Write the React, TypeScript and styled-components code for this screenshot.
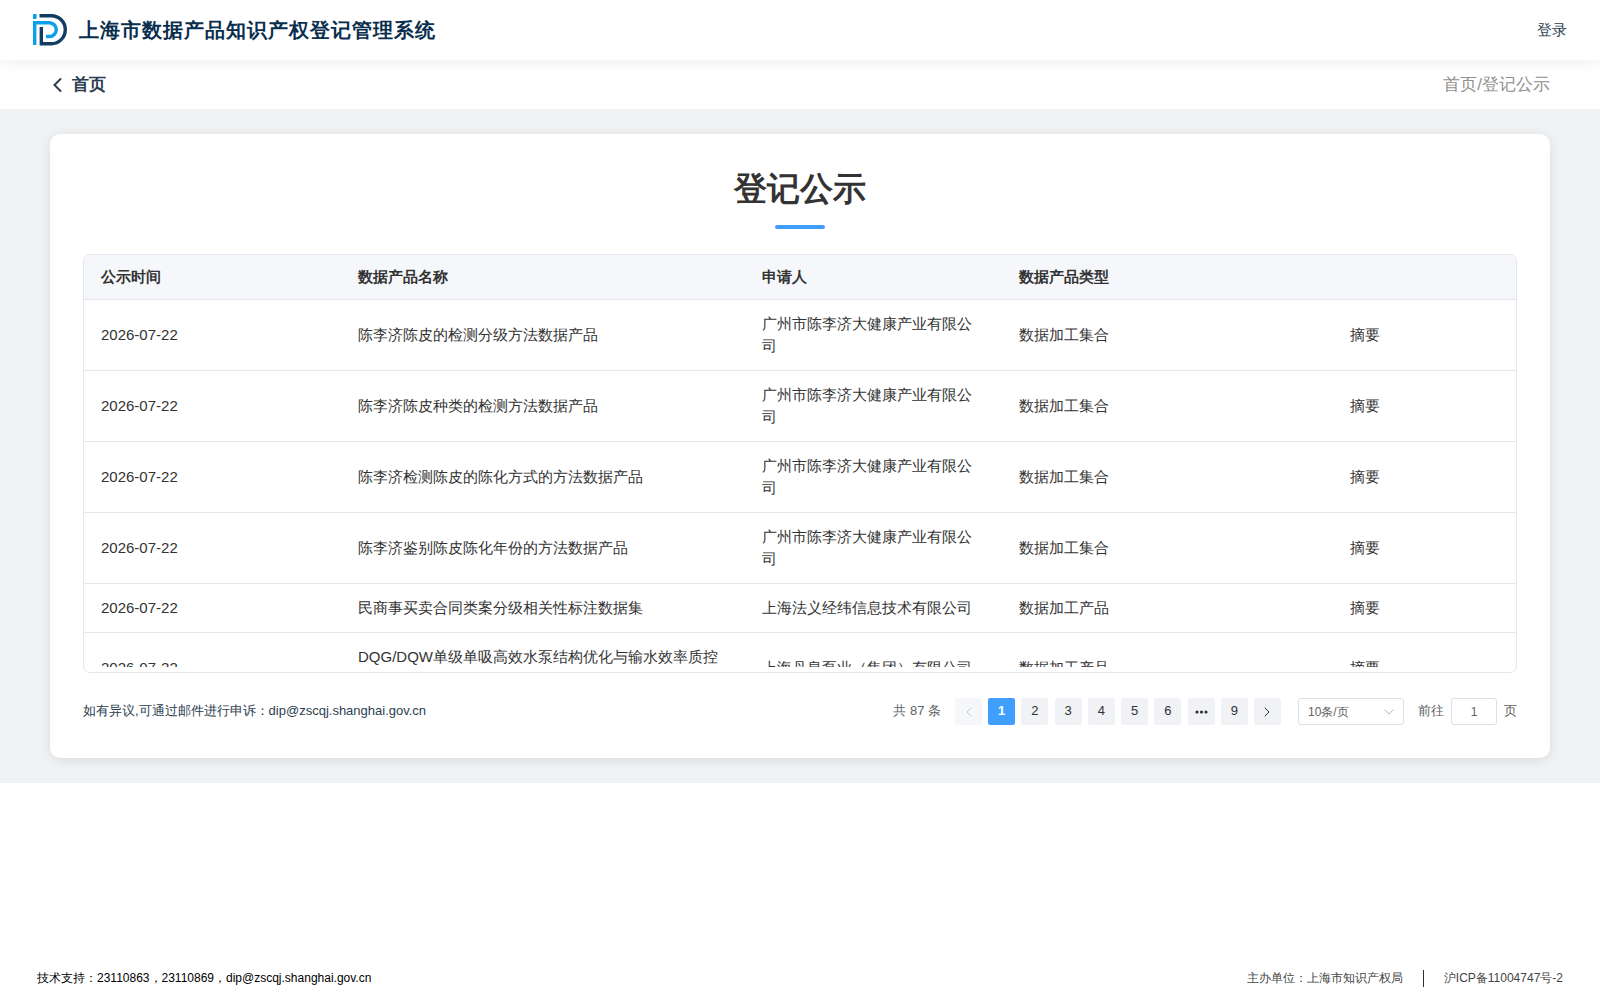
import React from 'react';
import styled, { createGlobalStyle, css } from 'styled-components';

const GlobalStyle = createGlobalStyle`
  * { box-sizing: border-box; }
  body {
    margin: 0;
    background: #fff;
    color: #2c3e50;
    font-family: "Liberation Sans", sans-serif;
    font-size: 15px;
    line-height: 22px;
  }
  button, input, select { font-family: inherit; }
`;

const Page = styled.div`
  display: flex;
  flex-direction: column;
  min-height: 100vh;
`;

const Header = styled.header`
  position: relative;
  z-index: 1;
  display: flex;
  align-items: center;
  justify-content: space-between;
  height: 60px;
  padding: 0 33px;
  background: #fff;
  box-shadow: 0 4px 12px rgba(0, 0, 0, 0.06);
`;

const Brand = styled.div`
  display: flex;
  align-items: center;
  gap: 11px;
  color: #0a2e4d;
  font-size: 20px;
  font-weight: 700;
  line-height: 30px;
  letter-spacing: 1px;
`;

const LoginLink = styled.a`
  color: #2c3e50;
  text-decoration: none;
`;

const SubBar = styled.nav`
  display: flex;
  align-items: center;
  justify-content: space-between;
  height: 49px;
  padding: 0 50px;
  font-size: 17px;
`;

const BackLink = styled.a`
  display: flex;
  align-items: center;
  gap: 8px;
  color: #2c3e50;
  font-weight: 700;
  text-decoration: none;
`;

const Crumbs = styled.span`
  color: #909090;
`;

const Main = styled.main`
  padding: 25px 50px;
  background: #f0f2f4;
`;

const Card = styled.section`
  padding: 33px;
  border-radius: 10px;
  background: #fff;
  box-shadow: 0 2px 12px rgba(0, 0, 0, 0.1);
`;

const Title = styled.h1`
  display: flex;
  flex-direction: column;
  align-items: center;
  gap: 14px;
  margin: 0 0 25px;
  color: #333;
  font-size: 33px;
  line-height: 44px;
  &::after {
    content: '';
    width: 50px;
    height: 4px;
    border-radius: 2px;
    background: #409eff;
  }
`;

const TableFrame = styled.div`
  padding-bottom: 5px;
  border: 1px solid #e4e7ed;
  border-radius: 7px;
  overflow: hidden;
`;

const TableScroll = styled.div`
  height: 412px;
  overflow-y: auto;
  scrollbar-width: none;
`;

const Table = styled.table`
  width: 100%;
  table-layout: fixed;
  border-collapse: separate;
  border-spacing: 0;
  color: #333;
`;

const Col = styled.col<{ $share: number }>`
  width: calc(100% * ${(p) => p.$share} / 39);
`;

const HeadCell = styled.th`
  position: sticky;
  top: 0;
  padding: 11px 17px;
  border-bottom: 1px solid #e4e7ed;
  background: #f5f7fa;
  text-align: left;
`;

const Cell = styled.td<{ $action?: boolean }>`
  padding: 13px 17px;
  border-bottom: 1px solid #e4e7ed;
  ${(p) => p.$action && css`
    padding-right: 62px;
    text-align: center;
  `}
`;

const TextButton = styled.button`
  padding: 0;
  border: 0;
  background: none;
  color: inherit;
  font-size: 15px;
  line-height: 22px;
  vertical-align: top;
  cursor: pointer;
`;

const CardFoot = styled.div`
  display: flex;
  align-items: center;
  justify-content: space-between;
  margin-top: 25px;
  font-size: 13px;
  line-height: 25px;
`;

const Notice = styled.p`
  margin: 0;
  padding-bottom: 2px;
`;

const Pagination = styled.div`
  display: flex;
  align-items: flex-start;
  color: #606266;
`;

const Pager = styled.div`
  display: flex;
  justify-content: space-between;
  width: 326px;
  margin: 0 17px 0 14px;
`;

const PageButton = styled.button<{ $active?: boolean }>`
  display: flex;
  align-items: center;
  justify-content: center;
  width: 27px;
  height: 27px;
  padding: 0 0 2px;
  border: 0;
  border-radius: 2px;
  background: ${(p) => (p.$active ? '#409eff' : '#f0f2f5')};
  color: ${(p) => (p.$active ? '#fff' : '#303133')};
  font-size: 13px;
  font-weight: ${(p) => (p.$active ? 700 : 400)};
  &:disabled {
    background: #f5f7fa;
    color: #c0c4cc;
  }
  > svg { margin-top: 2px; }
`;

const SizePicker = styled.div`
  display: grid;
  align-items: center;
  margin-right: 14px;
  > * { grid-area: 1 / 1; }
  > svg {
    justify-self: end;
    margin-right: 10px;
    color: #b4b8c0;
    pointer-events: none;
  }
`;

const SizeSelect = styled.select`
  width: 106px;
  height: 27px;
  padding: 0 9px;
  border: 1px solid #dcdfe6;
  border-radius: 3px;
  appearance: none;
  background: #fff;
  color: #606266;
  font-size: 12px;
`;

const Jumper = styled.label`
  display: flex;
  align-items: flex-start;
  gap: 7px;
`;

const JumpInput = styled.input`
  width: 46px;
  height: 27px;
  padding: 1px 0 0;
  border: 1px solid #dcdfe6;
  border-radius: 3px;
  color: #606266;
  font-size: 12px;
  text-align: center;
`;

const Footer = styled.footer`
  display: flex;
  align-items: center;
  justify-content: space-between;
  height: 44px;
  margin-top: auto;
  padding: 0 37px;
  color: #000;
  font-size: 12px;
`;

const FooterInfo = styled.div`
  display: flex;
  align-items: center;
  gap: 20px;
  color: #444;
`;

const Divider = styled.span`
  width: 1px;
  height: 17px;
  background: #303133;
`;

const RecordLink = styled.a`
  color: inherit;
  text-decoration: none;
`;

const Logo = () => (
  <svg width="35" height="32" viewBox="0 0 35 32" fill="none" aria-hidden="true">
    <path d="M0 0h3.600v4q0 1-1 1H0z" fill="#0aa0ea" />
    <path d="M1.700 31V8.800H16.400a6.850 6.850 0 0 1 0 13.700H13" stroke="#0aa0ea" strokeWidth="3.400" />
    <path d="M6.500 1.700H18.300a14 14 0 0 1 0 28H8.300V13" stroke="#123d63" strokeWidth="3.400" />
  </svg>
);

const Chevron = ({ d, width, height, stroke = 1 }: { d: string; width: number; height: number; stroke?: number }) => (
  <svg width={width} height={height} viewBox={`0 0 ${width} ${height}`} fill="none" stroke="currentColor" strokeWidth={stroke} strokeLinecap="round" aria-hidden="true">
    <path d={d} />
  </svg>
);

const Dots = () => (
  <svg width="13" height="5" viewBox="0 0 13 5" fill="currentColor" aria-hidden="true">
    <circle cx="2" cy="3" r="1.600" />
    <circle cx="6.500" cy="3" r="1.600" />
    <circle cx="11" cy="3" r="1.600" />
  </svg>
);

const rows = [
  ['陈李济陈皮的检测分级方法数据产品', '广州市陈李济大健康产业有限公司', '数据加工集合'],
  ['陈李济陈皮种类的检测方法数据产品', '广州市陈李济大健康产业有限公司', '数据加工集合'],
  ['陈李济检测陈皮的陈化方式的方法数据产品', '广州市陈李济大健康产业有限公司', '数据加工集合'],
  ['陈李济鉴别陈皮陈化年份的方法数据产品', '广州市陈李济大健康产业有限公司', '数据加工集合'],
  ['民商事买卖合同类案分级相关性标注数据集', '上海法义经纬信息技术有限公司', '数据加工产品'],
  ['DQG/DQW单级单吸高效水泵结构优化与输水效率质控数据集', '上海丹泉泵业（集团）有限公司', '数据加工产品'],
];

export default function App() {
  return (
    <>
      <GlobalStyle />
      <Page>
        <Header>
          <Brand>
            <Logo />
            <span>上海市数据产品知识产权登记管理系统</span>
          </Brand>
          <LoginLink href="#login">登录</LoginLink>
        </Header>
        <SubBar>
          <BackLink href="#home">
            <Chevron d="M10.500 2 4.500 8l6 6" width={14} height={16} stroke={2} />
            首页
          </BackLink>
          <Crumbs>首页/登记公示</Crumbs>
        </SubBar>
        <Main>
          <Card>
            <Title>登记公示</Title>
            <TableFrame>
              <TableScroll>
                <Table>
                  <colgroup>
                    {[7, 11, 7, 7, 7].map((share, i) => <Col key={i} $share={share} />)}
                  </colgroup>
                  <thead>
                    <tr>
                      {['公示时间', '数据产品名称', '申请人', '数据产品类型', ''].map((h, i) => (
                        <HeadCell key={i}>{h}</HeadCell>
                      ))}
                    </tr>
                  </thead>
                  <tbody>
                    {rows.map(([name, applicant, kind]) => (
                      <tr key={name}>
                        <Cell>2026-07-22</Cell>
                        <Cell>{name}</Cell>
                        <Cell>{applicant}</Cell>
                        <Cell>{kind}</Cell>
                        <Cell $action><TextButton>摘要</TextButton></Cell>
                      </tr>
                    ))}
                  </tbody>
                </Table>
              </TableScroll>
            </TableFrame>
            <CardFoot>
              <Notice>如有异议,可通过邮件进行申诉：dip@zscqj.shanghai.gov.cn</Notice>
              <Pagination>
                <span>共 87 条</span>
                <Pager>
                  <PageButton disabled aria-label="上一页"><Chevron d="M6 1 2 5l4 4" width={8} height={10} /></PageButton>
                  <PageButton $active>1</PageButton>
                  {[2, 3, 4, 5, 6].map((n) => <PageButton key={n}>{n}</PageButton>)}
                  <PageButton aria-label="更多"><Dots /></PageButton>
                  <PageButton>9</PageButton>
                  <PageButton aria-label="下一页"><Chevron d="M2 1l4 4-4 4" width={8} height={10} /></PageButton>
                </Pager>
                <SizePicker>
                  <SizeSelect aria-label="每页条数" defaultValue="10">
                    <option value="10">10条/页</option>
                    <option value="20">20条/页</option>
                  </SizeSelect>
                  <Chevron d="M1 1l4 4 4-4" width={10} height={6} />
                </SizePicker>
                <Jumper>
                  前往
                  <JumpInput defaultValue="1" />
                  页
                </Jumper>
              </Pagination>
            </CardFoot>
          </Card>
        </Main>
        <Footer>
          <span>技术支持：23110863，23110869，dip@zscqj.shanghai.gov.cn</span>
          <FooterInfo>
            <span>主办单位：上海市知识产权局</span>
            <Divider />
            <RecordLink href="#icp">沪ICP备11004747号-2</RecordLink>
          </FooterInfo>
        </Footer>
      </Page>
    </>
  );
}
